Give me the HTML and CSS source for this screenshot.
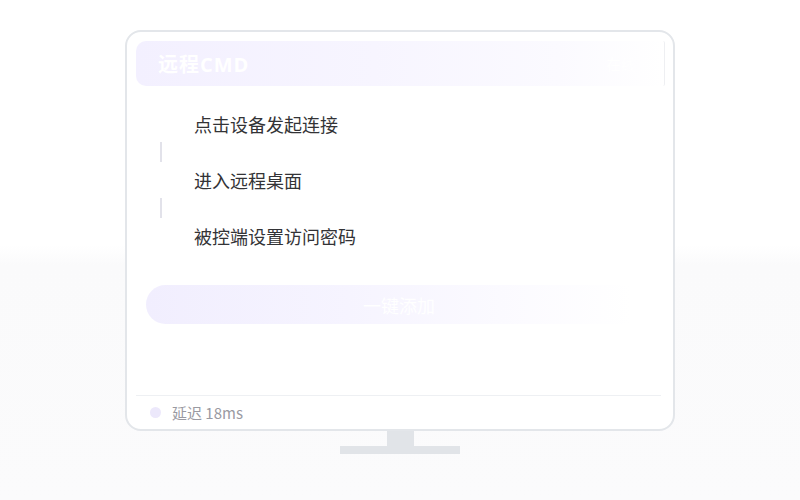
FILE: index.html
```html
<!DOCTYPE html>
<html lang="zh">
<head>
<meta charset="utf-8">
<link rel="stylesheet" href="styles.css">
</head>
<body>
<div class="stage">
  <div class="monitor">
    <div class="screen">
      <div class="header">
        <span class="title">远程CMD</span>
        <span class="status">在线</span>
      </div>
      <div class="steps">
        <div class="step">点击设备发起连接</div>
        <div class="connector"></div>
        <div class="step">进入远程桌面</div>
        <div class="connector"></div>
        <div class="step">被控端设置访问密码</div>
      </div>
      <div class="action">
        <div class="btn">一键添加</div>
      </div>
      <div class="footer">
        <span class="dot"></span>
        <span class="latency">延迟 18ms</span>
      </div>
    </div>
  </div>
  <div class="neck"></div>
  <div class="base"></div>
</div>
</body>
</html>
```
FILE: styles.css
```css
html, body {
  margin: 0;
  padding: 0;
}
body {
  width: 800px;
  height: 500px;
  background: linear-gradient(to bottom, #ffffff 0, #ffffff 245px, #fafafb 265px, #fbfbfc 500px);
  font-family: "Noto Sans CJK SC", "Noto Sans", sans-serif;
  overflow: hidden;
}
.stage {
  display: flex;
  flex-direction: column;
  align-items: center;
  padding-top: 30px;
}
.monitor {
  width: 550px;
  height: 401px;
  box-sizing: border-box;
  border: 2px solid #e3e6ea;
  border-radius: 16px;
  background: #ffffff;
  padding: 9px 8px 0 9px;
  display: flex;
  flex-direction: column;
}
.screen {
  flex: 1;
  display: flex;
  flex-direction: column;
}
.header {
  height: 45px;
  border-radius: 10px 2px 2px 10px;
  background: linear-gradient(to right, #f3f0ff 0%, #f7f5ff 45%, #fbfaff 80%, #ffffff 100%);
  border-right: 1px solid #eeeff2;
  display: flex;
  align-items: center;
  justify-content: space-between;
  padding: 0 28px 0 22px;
}
.title {
  color: #ffffff;
  font-size: 20px;
  font-weight: 700;
  letter-spacing: 1px;
  font-family: "Open Sans", "Noto Sans CJK SC", sans-serif;
}
.status {
  color: #ffffff;
  font-size: 15px;
}
.steps {
  display: flex;
  flex-direction: column;
  padding: 24px 0 0 24px;
}
.step {
  height: 28px;
  line-height: 28px;
  padding-left: 34px;
  font-size: 18px;
  color: #333336;
}
.connector {
  width: 2px;
  height: 20px;
  margin: 4px 0 4px 0;
  background: #e2e2ea;
}
.action {
  padding: 35px 13px 0 10px;
}
.btn {
  height: 39px;
  border-radius: 20px;
  background: linear-gradient(to right, #f1eefe 0%, #f6f4ff 40%, #fbfaff 70%, #ffffff 96%);
  color: #ffffff;
  font-size: 18px;
  display: flex;
  align-items: center;
  justify-content: center;
}
.footer {
  margin-top: auto;
  border-top: 1px solid #eef0f3;
  height: 33px;
  display: flex;
  align-items: center;
  padding-left: 14px;
  margin-right: 4px;
}
.dot {
  width: 11px;
  height: 11px;
  border-radius: 50%;
  background: #ece8fb;
  margin-right: 11px;
}
.latency {
  color: #9a9aa2;
  font-size: 15px;
}
.neck {
  width: 27px;
  height: 15px;
  background: #e1e4e8;
}
.base {
  width: 120px;
  height: 8px;
  background: #e1e4e8;
}
```
